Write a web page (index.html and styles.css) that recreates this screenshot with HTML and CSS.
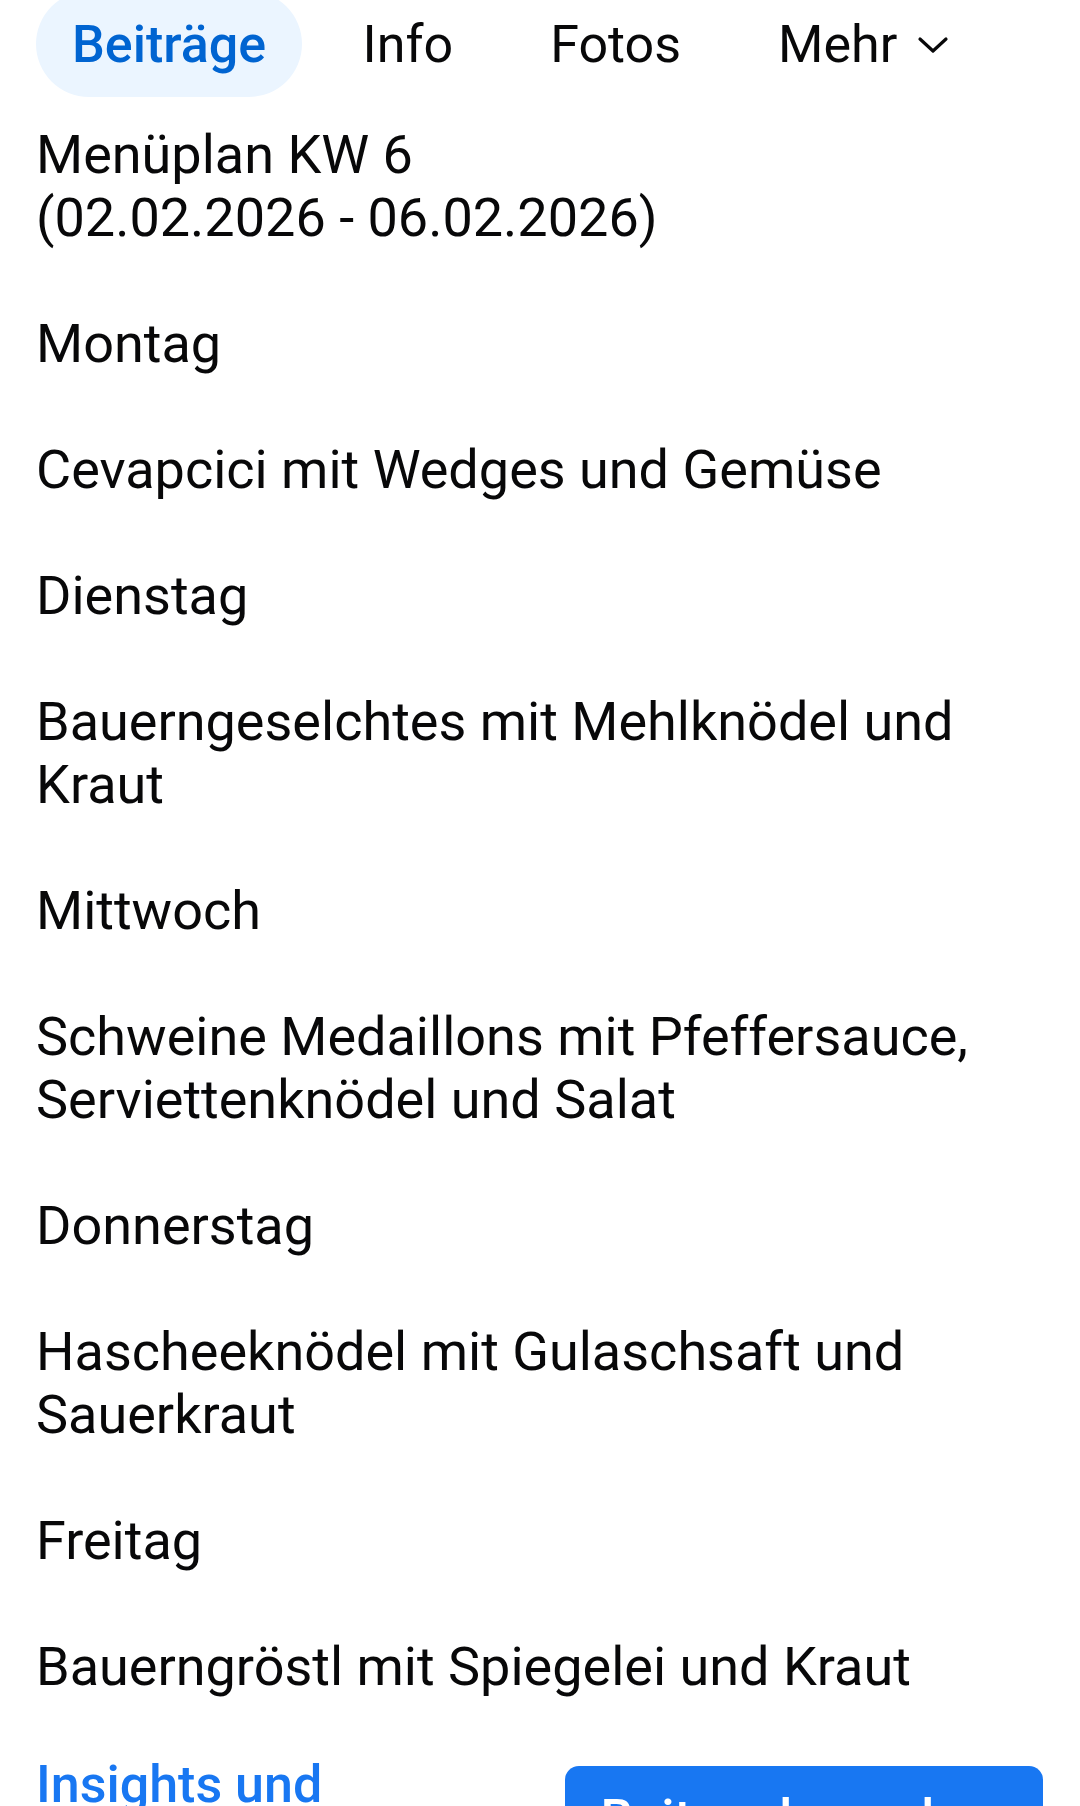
FILE: index.html
```html
<!DOCTYPE html>
<html lang="de">
<head>
<meta charset="utf-8">
<title>Beiträge</title>
<link rel="stylesheet" href="styles.css">
</head>
<body>
<div class="page">
  <nav class="tabs">
    <div class="tab tab-active">Beiträge</div>
    <div class="tab">Info</div>
    <div class="tab">Fotos</div>
    <div class="tab">Mehr
      <svg class="chev" viewBox="0 0 32 18" width="32" height="18" aria-hidden="true">
        <path d="M3 3 L16 15 L29 3" fill="none" stroke="#080809" stroke-width="3.2" stroke-linecap="round" stroke-linejoin="round"/>
      </svg>
    </div>
  </nav>

  <article class="post">
    <p class="gap">Menüplan KW 6<br>(02.02.2026 - 06.02.2026)</p>
    <p class="gap">Montag</p>
    <p class="gap">Cevapcici mit Wedges und Gemüse</p>
    <p class="gap">Dienstag</p>
    <p class="gap">Bauerngeselchtes mit Mehlknödel und Kraut</p>
    <p class="gap">Mittwoch</p>
    <p class="gap">Schweine Medaillons mit Pfeffersauce, Serviettenknödel und Salat</p>
    <p class="gap">Donnerstag</p>
    <p class="gap">Hascheeknödel mit Gulaschsaft und Sauerkraut</p>
    <p class="gap">Freitag</p>
    <p>Bauerngröstl mit Spiegelei und Kraut</p>
  </article>

  <div class="actions">
    <div class="insights">Insights und Werbeanzeigen</div>
    <button class="boost">Beitrag bewerben</button>
  </div>
</div>
</body>
</html>
```

FILE: styles.css
```css
html, body {
  margin: 0;
  padding: 0;
  background: #ffffff;
}

body {
  font-family: Roboto, "Noto Sans", "Liberation Sans", sans-serif;
  color: #080809;
  overflow: hidden;
}

.page {
  padding: 0 37px 0 36px;
}

.tabs {
  display: flex;
  align-items: center;
  gap: 24px;
  margin-top: -9px;
  height: 106px;
}

.tab {
  display: flex;
  align-items: center;
  height: 106px;
  padding: 0 36px;
  font-size: 52px;
  font-weight: 400;
  color: #080809;
  border-radius: 53px;
  white-space: nowrap;
}

.tab + .tab {
  padding: 0 36.5px;
}

.tab-active {
  background: #ebf5ff;
  color: #0064d1;
  font-weight: 500;
}

.chev {
  margin-left: 20px;
  margin-top: 2px;
}

.post {
  margin-top: 26px;
  font-size: 54px;
  line-height: 63px;
}

.post p {
  margin: 0;
}

.post p.gap {
  margin-bottom: 63px;
}

.actions {
  display: flex;
  align-items: flex-start;
  gap: 28px;
  margin-top: 56px;
}

.insights {
  flex: 1;
  font-size: 52px;
  font-weight: 500;
  color: #1877f2;
}

.boost {
  width: 478px;
  margin-top: 12px;
  padding: 22px 20px;
  border: none;
  border-radius: 14px;
  background: #1877f2;
  color: #ffffff;
  font-family: inherit;
  font-size: 52px;
  font-weight: 500;
  line-height: normal;
}
```
